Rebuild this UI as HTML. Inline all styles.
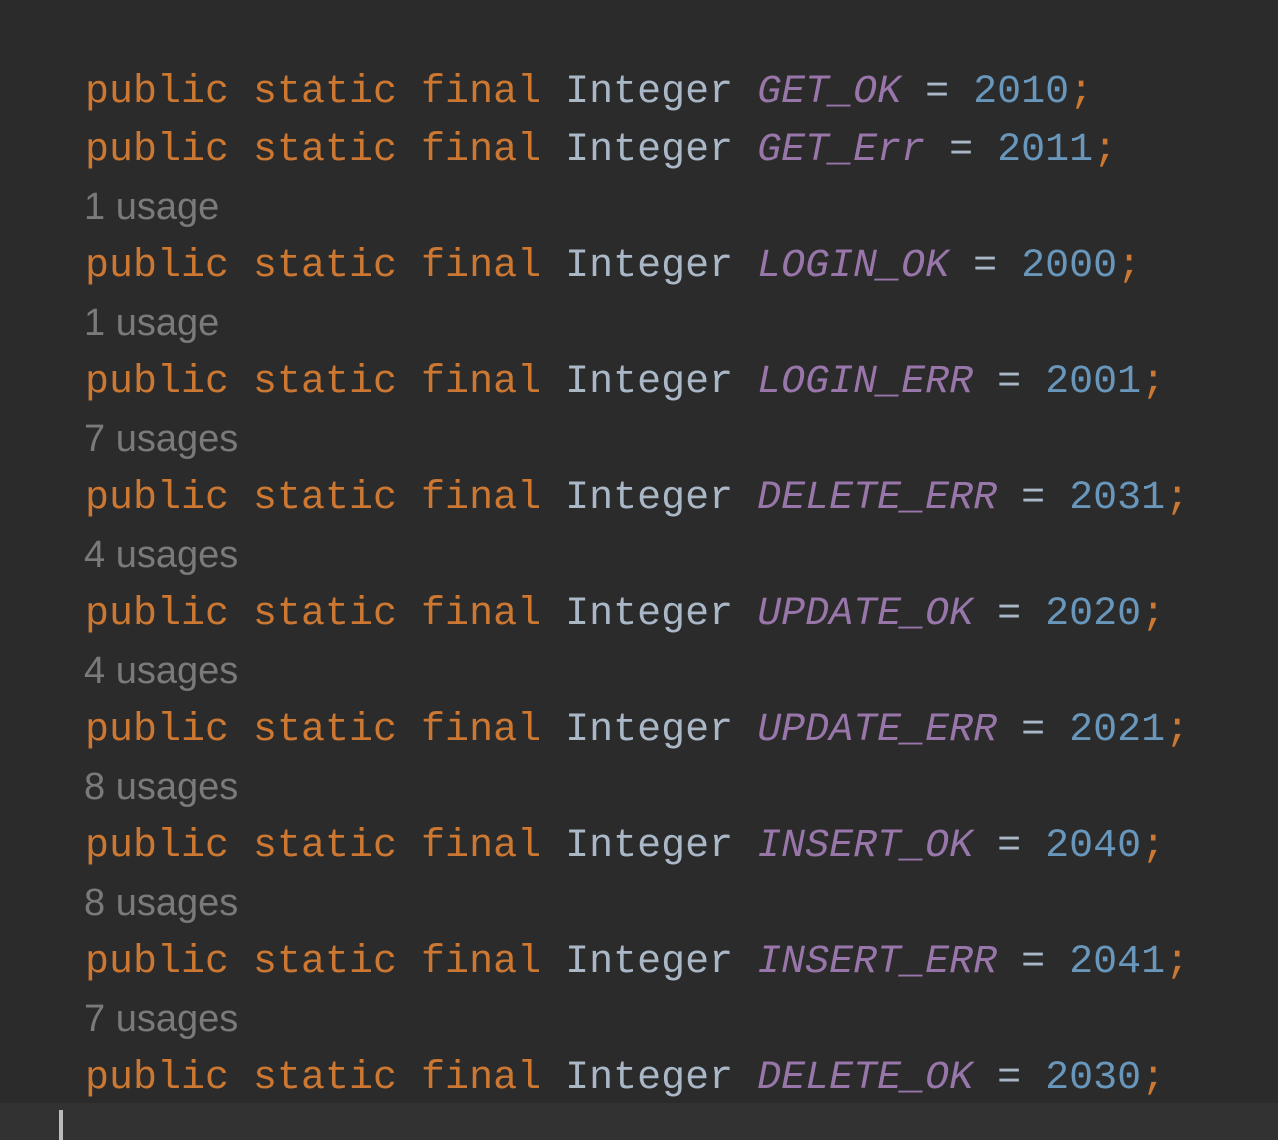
<!DOCTYPE html>
<html><head><meta charset="utf-8"><style>
html,body{margin:0;padding:0;}
body{width:1278px;height:1140px;background:#2b2b2b;position:relative;overflow:hidden;}
.l{position:absolute;left:85px;height:58px;line-height:58px;white-space:pre;font-family:"Liberation Mono",monospace;font-size:40px;color:#a9b7c6;}
.k{color:#cc7832}.c{color:#9876aa;font-style:italic}.n{color:#6897bb}
.u{position:absolute;left:84px;height:58px;line-height:58px;font-family:"Liberation Sans",sans-serif;font-size:38px;color:#7a7a7a;white-space:pre;}
.band{position:absolute;left:0;top:1103px;width:1278px;height:37px;background:#323232;}
.cur{position:absolute;left:59px;top:1110px;width:4px;height:30px;background:#bbbbbb;}
</style></head><body>
<div class="band"></div><div class="cur"></div>
<div class="l" style="top:64px"><span class="k">public static final </span>Integer <span class="c">GET_OK</span> = <span class="n">2010</span><span class="k">;</span></div>
<div class="l" style="top:122px"><span class="k">public static final </span>Integer <span class="c">GET_Err</span> = <span class="n">2011</span><span class="k">;</span></div>
<div class="u" style="top:178px">1 usage</div>
<div class="l" style="top:238px"><span class="k">public static final </span>Integer <span class="c">LOGIN_OK</span> = <span class="n">2000</span><span class="k">;</span></div>
<div class="u" style="top:294px">1 usage</div>
<div class="l" style="top:354px"><span class="k">public static final </span>Integer <span class="c">LOGIN_ERR</span> = <span class="n">2001</span><span class="k">;</span></div>
<div class="u" style="top:410px">7 usages</div>
<div class="l" style="top:470px"><span class="k">public static final </span>Integer <span class="c">DELETE_ERR</span> = <span class="n">2031</span><span class="k">;</span></div>
<div class="u" style="top:526px">4 usages</div>
<div class="l" style="top:586px"><span class="k">public static final </span>Integer <span class="c">UPDATE_OK</span> = <span class="n">2020</span><span class="k">;</span></div>
<div class="u" style="top:642px">4 usages</div>
<div class="l" style="top:702px"><span class="k">public static final </span>Integer <span class="c">UPDATE_ERR</span> = <span class="n">2021</span><span class="k">;</span></div>
<div class="u" style="top:758px">8 usages</div>
<div class="l" style="top:818px"><span class="k">public static final </span>Integer <span class="c">INSERT_OK</span> = <span class="n">2040</span><span class="k">;</span></div>
<div class="u" style="top:874px">8 usages</div>
<div class="l" style="top:934px"><span class="k">public static final </span>Integer <span class="c">INSERT_ERR</span> = <span class="n">2041</span><span class="k">;</span></div>
<div class="u" style="top:990px">7 usages</div>
<div class="l" style="top:1050px"><span class="k">public static final </span>Integer <span class="c">DELETE_OK</span> = <span class="n">2030</span><span class="k">;</span></div>
</body></html>
